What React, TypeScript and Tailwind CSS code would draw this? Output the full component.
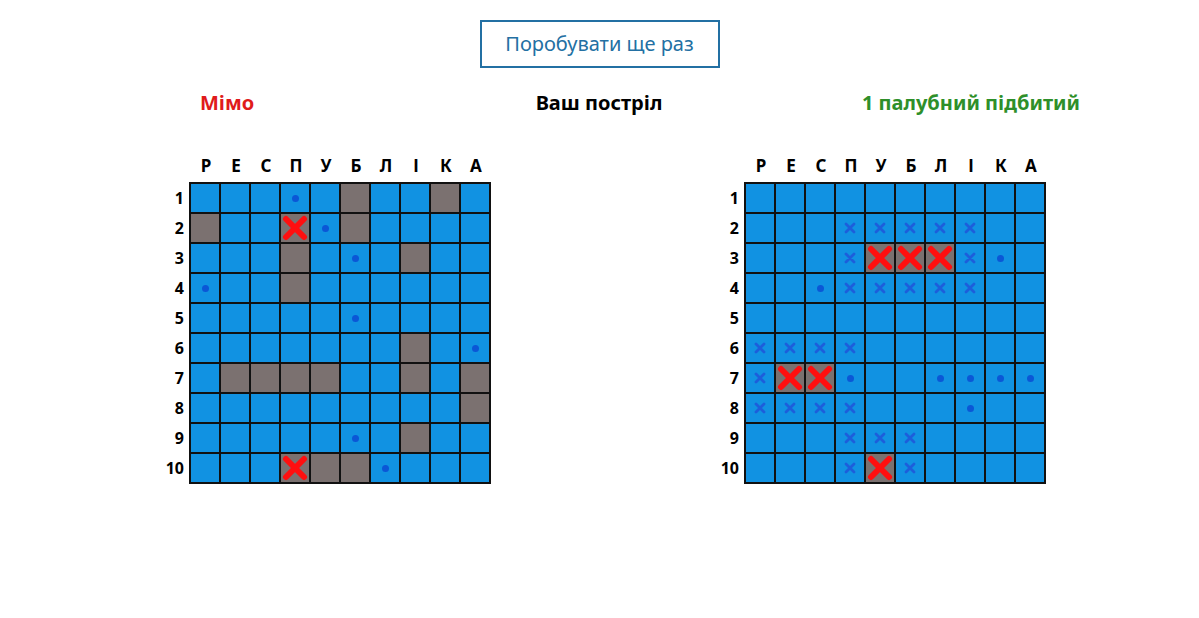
import React from 'react';

const LETTERS = ['Р', 'Е', 'С', 'П', 'У', 'Б', 'Л', 'І', 'К', 'А'];

// . empty, o miss dot, s ship, h hit ship, x blocked cell
const myBoard = [
  '...o.s..s.',
  's..hos....',
  '...s.o.s..',
  'o..s......',
  '.....o....',
  '.......s.o',
  '.ssss..s.s',
  '.........s',
  '.....o.s..',
  '...hsso...',
];

const enemyBoard = [
  '..........',
  '...xxxxx..',
  '...xhhhxo.',
  '..oxxxxx..',
  '..........',
  'xxxx......',
  'xhho..oooo',
  'xxxx...o..',
  '...xxx....',
  '...xhx....',
];

const font = { fontFamily: "'Comic Sans MS', 'Noto Sans', sans-serif" };

const Cell = ({ code }: { code: string }) => {
  const ship = code === 's' || code === 'h';
  return (
    <div className={`w-[28px] h-[28px] flex items-center justify-center ${ship ? 'bg-[#7b7170]' : 'bg-[#1192e2]'}`}>
      {code === 'o' && <div className="w-[7px] h-[7px] rounded-full bg-[#0b57d6]" />}
      {code === 'x' && (
        <svg width="12" height="12" viewBox="0 0 12 12">
          <path d="M2 2 L10 10 M10 2 L2 10" stroke="#1d5edb" strokeWidth="2.8" strokeLinecap="round" />
        </svg>
      )}
      {code === 'h' && (
        <svg width="26" height="26" viewBox="0 0 26 26">
          <path d="M4 4 L22 22 M22 4 L4 22" stroke="#ff0f0f" strokeWidth="6" strokeLinecap="round" />
        </svg>
      )}
    </div>
  );
};

const Board = ({ rows }: { rows: string[] }) => (
  <div className="flex flex-col">
    <div className="flex pl-[31px] h-[26px] items-start">
      {LETTERS.map((l) => (
        <div key={l} className="w-[30px] text-center text-[17px] font-bold text-black leading-[20px]">
          {l}
        </div>
      ))}
    </div>
    <div className="flex">
      <div className="flex flex-col w-[29px] pt-[2px] gap-[2px]">
        {rows.map((_, i) => (
          <div key={i} className="h-[28px] pr-[5px] text-right text-[16px] font-bold text-black leading-[28px]">
            {i + 1}
          </div>
        ))}
      </div>
      <div className="grid grid-cols-10 gap-[2px] bg-[#111] p-[2px]">
        {rows.flatMap((r, i) => r.split('').map((c, j) => <Cell key={`${i}-${j}`} code={c} />))}
      </div>
    </div>
  </div>
);

export default function App() {
  return (
    <div className="w-[1199px] h-[618px] bg-white" style={font}>
      <div className="flex justify-center pt-[20px]">
        <div className="w-[240px] h-[48px] border-2 border-[#2370a3] flex items-center justify-center text-[20px] text-[#2370a3]">
          Поробувати ще раз
        </div>
      </div>
      <div className="flex mt-[20px] h-[30px] items-center text-[20px] font-bold">
        <div className="w-[399px] pl-[200px] text-[#e01b1b]">Мімо</div>
        <div className="w-[400px] text-center text-black">Ваш постріл</div>
        <div className="flex-1 text-right pr-[119px] text-[#2e8f2a]">1 палубний підбитий</div>
      </div>
      <div className="flex pl-[160px] gap-[224px] mt-[38px]">
        <Board rows={myBoard} />
        <Board rows={enemyBoard} />
      </div>
    </div>
  );
}
